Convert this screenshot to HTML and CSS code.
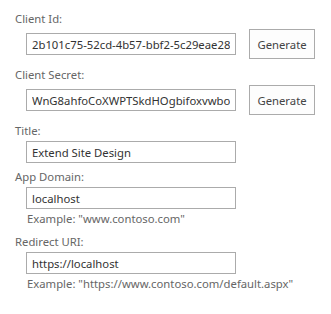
FILE: index.html
```html
<!DOCTYPE html>
<html lang="en">
<head>
    <meta charset="utf-8">
    <title>App Registration</title>
    <link rel="stylesheet" href="styles.css">
</head>
<body>
    <form class="form">
        <div class="field">
            <label class="field-label" for="clientId">Client Id:</label>
            <div class="field-row">
                <input class="text-input" id="clientId" type="text" value="2b101c75-52cd-4b57-bbf2-5c29eae28a41">
                <button class="btn" type="button">Generate</button>
            </div>
        </div>

        <div class="field">
            <label class="field-label" for="clientSecret">Client Secret:</label>
            <div class="field-row">
                <input class="text-input" id="clientSecret" type="text" value="WnG8ahfoCoXWPTSkdHOgbifoxvwbolQ=">
                <button class="btn" type="button">Generate</button>
            </div>
        </div>

        <div class="field field-plain">
            <label class="field-label" for="title">Title:</label>
            <div class="field-row">
                <input class="text-input" id="title" type="text" value="Extend Site Design">
            </div>
        </div>

        <div class="field field-plain">
            <label class="field-label" for="appDomain">App Domain:</label>
            <div class="field-row">
                <input class="text-input" id="appDomain" type="text" value="localhost">
            </div>
            <div class="hint">Example: "www.contoso.com"</div>
        </div>

        <div class="field field-plain">
            <label class="field-label" for="redirectUri">Redirect URI:</label>
            <div class="field-row">
                <input class="text-input" id="redirectUri" type="text" value="https://localhost">
            </div>
            <div class="hint">Example: "https://www.contoso.com/default.aspx"</div>
        </div>
    </form>
</body>
</html>
```

FILE: styles.css
```css
* {
    margin: 0;
    padding: 0;
    box-sizing: border-box;
}

body {
    font-family: 'Noto Sans', 'Open Sans', sans-serif;
    background: #fff;
    color: #444;
}

.form {
    padding: 10px 0 0 14px;
    display: flex;
    flex-direction: column;
}

.field {
    display: flex;
    flex-direction: column;
    margin-bottom: 7px;
}

.field-plain {
    margin-bottom: 5px;
}

.field-label {
    font-size: 11.3px;
    line-height: 18px;
    color: #666;
    padding-left: 1px;
}

.field-row {
    display: flex;
    align-items: center;
    gap: 13px;
    padding-left: 12px;
    margin-top: 1px;
}

.text-input {
    width: 210px;
    height: 22px;
    border: 1px solid #ababab;
    padding: 0 5px;
    font-family: inherit;
    font-size: 11.3px;
    color: #333;
    background: #fff;
    outline: none;
}

.btn {
    width: 66px;
    height: 30px;
    border: 1px solid #ababab;
    background: #fdfdfd;
    font-family: inherit;
    font-size: 11.3px;
    color: #444;
}

.hint {
    font-size: 11.3px;
    line-height: 15px;
    color: #666;
    padding-left: 13px;
    margin: 2px 0 2px;
}
```
